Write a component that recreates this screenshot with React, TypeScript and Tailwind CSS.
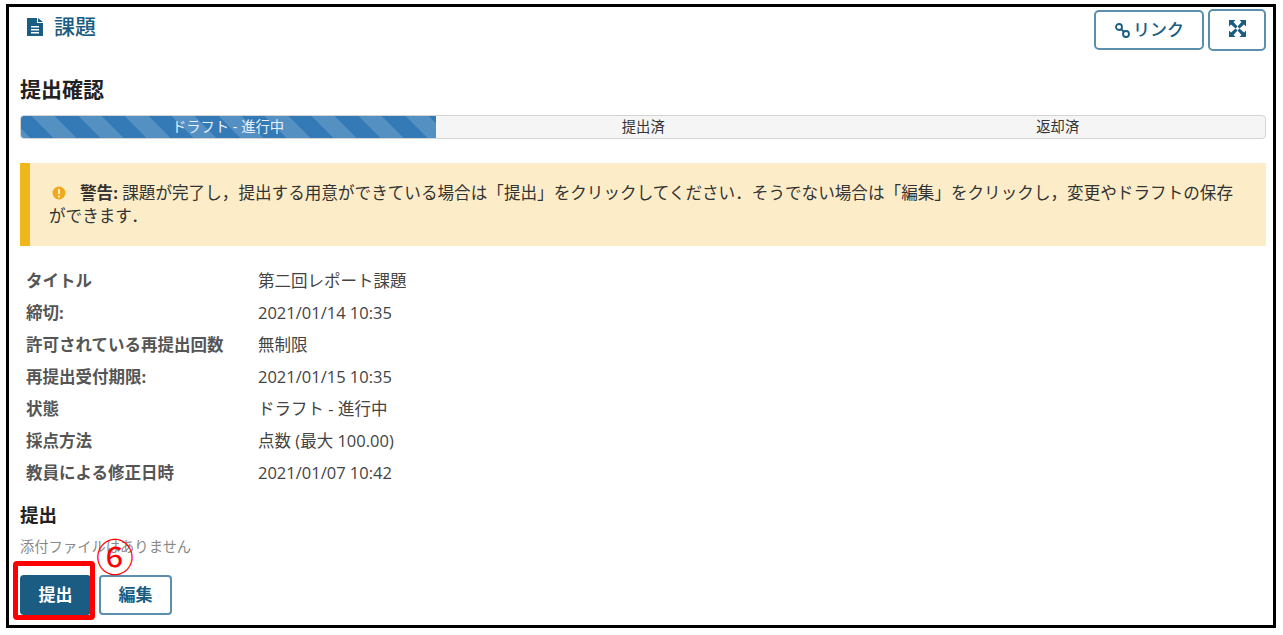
import React from 'react';

const font = 'font-["Open_Sans","Noto_Sans_CJK_JP",sans-serif]';

const rows = [
  ['タイトル', '第二回レポート課題'],
  ['締切:', '2021/01/14 10:35'],
  ['許可されている再提出回数', '無制限'],
  ['再提出受付期限:', '2021/01/15 10:35'],
  ['状態', 'ドラフト - 進行中'],
  ['採点方法', '点数 (最大 100.00)'],
  ['教員による修正日時', '2021/01/07 10:42'],
];

export default function App() {
  return (
    <div className={`w-[1283px] h-[635px] bg-white pl-[6px] pt-[4px] overflow-hidden ${font}`}>
      <div className="relative w-[1270px] h-[624px] border-[3px] border-black pl-[11px] pr-[7px]">
        <div className="flex justify-between h-[48px]">
          <div className="flex items-center gap-[11px] pl-[7px] h-[33px] pt-[6px] text-[#1a5c82]">
            <svg width="16" height="18" viewBox="0 0 16 18">
              <path
                fill="#1a5c82"
                fillRule="evenodd"
                d="M0 0h10v5h6v13H0zM11 0l5 4h-5zM4 8v1.500h8V8zM4 11v1.500h8V11zM4 14v1.500h8V14z"
              />
            </svg>
            <span className="text-[21px] font-medium">課題</span>
          </div>
          <div className="flex items-start gap-[4px] pt-[2px]">
            <button className="mt-[1px] w-[110px] h-[40px] flex items-center justify-center gap-[2px] border-2 border-[#5b8fab] rounded-[5px] text-[#1a5c82] text-[17px] font-medium">
              <svg width="17" height="17" viewBox="0 0 17 17" fill="none" stroke="#1a5c82" strokeWidth="1.800">
                <circle cx="5" cy="5" r="3" />
                <circle cx="12" cy="12" r="3" />
                <path d="M7 7l3 3" />
              </svg>
              <span>リンク</span>
            </button>
            <button className="w-[58px] h-[42px] flex items-start justify-center pt-[9px] border-2 border-[#5b8fab] rounded-[5px]">
              <svg width="17" height="17" viewBox="0 0 17 17" fill="#1a5c82">
                <path d="M0 0h6.500L4.500 2 8.500 6.500 6.500 8.500 2 4.500 0 6.500z" />
                <path d="M17 0v6.500L15 4.500 10.500 8.500 8.500 6.500 12.500 2 10.500 0z" />
                <path d="M0 17v-6.500L2 12.500 6.500 8.500 8.500 10.500 4.500 15 6.500 17z" />
                <path d="M17 17h-6.500L12.500 15 8.500 10.500 10.500 8.500 15 12.500 17 10.500z" />
              </svg>
            </button>
          </div>
        </div>

        <h2 className="mt-[16px] text-[21px] leading-[36px] font-bold text-[#222]">提出確認</h2>

        <div className="mt-[8px] flex h-[24px] rounded-[4px] overflow-hidden border border-[#d4d4d4] bg-[#f5f5f5] text-[14.300px] leading-[22px] text-center text-[#333]">
          <div className="w-[416px] -ml-px -my-px h-[24px] leading-[24px] text-[#e8f0f7] bg-[repeating-linear-gradient(45deg,#5590c3_0,#5590c3_8px,#337ab7_8px,#337ab7_24.500px,#5590c3_24.500px,#5590c3_33px)]">
            ドラフト - 進行中
          </div>
          <div className="flex-1">提出済</div>
          <div className="flex-1">返却済</div>
        </div>

        <div className="mt-[24px] h-[83px] bg-[#fcedc8] border-l-[10px] border-[#f0b71c] pl-[19px] pr-[24px] pt-[18px] text-[16.600px] leading-[23px] text-[#333]">
          <svg className="inline-block ml-[3px] mr-[14px] align-[-1px]" width="14" height="14" viewBox="0 0 14 14">
            <circle cx="7" cy="7" r="6.500" fill="#f0a81c" />
            <path d="M6 3h2v5H6zM6 9.500h2v2H6z" fill="#fcedc8" />
          </svg>
          <strong className="font-bold">警告:</strong> 課題が完了し，提出する用意ができている場合は「提出」をクリックしてください．そうでない場合は「編集」をクリックし，変更やドラフトの保存ができます．
        </div>

        <div className="mt-[19px] pl-[6px] text-[16.500px] text-[#555]">
          {rows.map(([label, value]) => (
            <div key={label} className="flex h-[32px] items-center">
              <div className="w-[232px] font-bold">{label}</div>
              <div className="text-[#444]">{value}</div>
            </div>
          ))}
        </div>

        <h3 className="mt-[12px] text-[18.500px] leading-[28px] font-bold text-[#222]">提出</h3>
        <p className="mt-[8px] text-[14.300px] leading-[20px] text-[#888]">添付ファイルはありません</p>
        <div className="mt-[18px] flex gap-[8px]">
          <button className="w-[71px] h-[40px] rounded-[4px] bg-[#1a5c82] text-white text-[17px] font-bold">提出</button>
          <button className="w-[73px] h-[40px] rounded-[4px] border-2 border-[#5b8fab] text-[#1a5c82] text-[17px] font-bold">編集</button>
        </div>

        <div className="absolute left-[4px] top-[554px] w-[82px] h-[59px] border-[5px] border-[#ff0000] rounded-[4px]" />
        <div className="absolute left-[87px] top-[528px] text-[#ff0000] text-[38px] leading-[46px] font-['Liberation_Serif','DejaVu_Serif','Noto_Sans_CJK_JP',serif]">⑥</div>
      </div>
    </div>
  );
}
